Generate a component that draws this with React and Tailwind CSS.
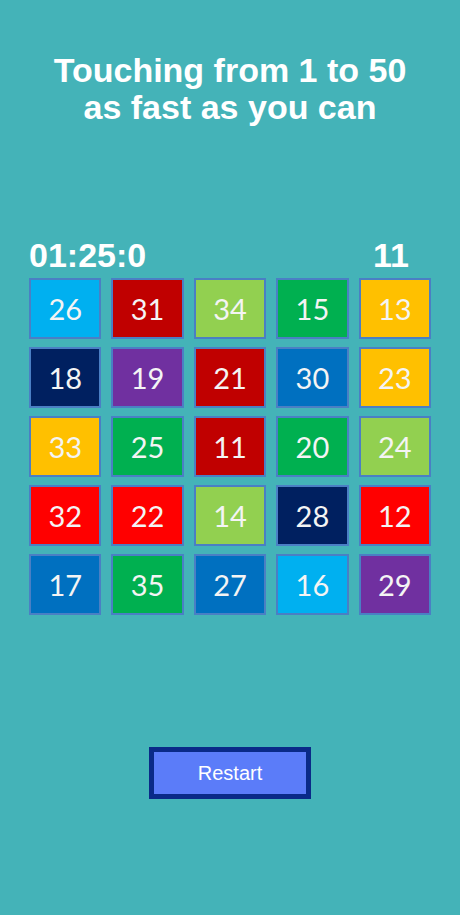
const tiles = [
  [26, "bg-[#00b0f0]"], [31, "bg-[#c00000]"], [34, "bg-[#92d050]"], [15, "bg-[#00b050]"], [13, "bg-[#ffc000]"],
  [18, "bg-[#002060]"], [19, "bg-[#7030a0]"], [21, "bg-[#c00000]"], [30, "bg-[#0070c0]"], [23, "bg-[#ffc000]"],
  [33, "bg-[#ffc000]"], [25, "bg-[#00b050]"], [11, "bg-[#c00000]"], [20, "bg-[#00b050]"], [24, "bg-[#92d050]"],
  [32, "bg-[#ff0000]"], [22, "bg-[#ff0000]"], [14, "bg-[#92d050]"], [28, "bg-[#002060]"], [12, "bg-[#ff0000]"],
  [17, "bg-[#0070c0]"], [35, "bg-[#00b050]"], [27, "bg-[#0070c0]"], [16, "bg-[#00b0f0]"], [29, "bg-[#7030a0]"],
];

export default function App() {
  return (
    <div className="min-h-screen w-full bg-[#44b3b8] flex flex-col items-center font-['Liberation_Sans',Arial,sans-serif]">
      {/* title */}
      <h1 className="mt-[52px] text-white font-bold text-[34px] leading-[37px] text-center">
        Touching from 1 to 50
        <br />
        as fast as you can
      </h1>

      {/* timer + score */}
      <div className="mt-[112px] w-[402px] flex justify-between items-end">
        <span className="text-white font-bold text-[34px] leading-[34px]">01:25:0</span>
        <span className="text-white font-bold text-[34px] leading-[34px] mr-[22px]">11</span>
      </div>

      {/* board */}
      <div className="mt-[6px] w-[402px] grid grid-cols-5 gap-x-[10px] gap-y-[8px]">
        {tiles.map(([n, bg]) => (
          <button
            key={n}
            className={`${bg} h-[61px] border-2 border-[#4a7fc4] flex items-center justify-center text-[#f4f4f4] text-[29px] font-['Lato',sans-serif]`}
          >
            {n}
          </button>
        ))}
      </div>

      <button className="mt-[132px] w-[162px] h-[52px] bg-[#5b7cf9] border-[5px] border-[#0a2a88] text-white text-[20px]">
        Restart
      </button>
    </div>
  );
}
